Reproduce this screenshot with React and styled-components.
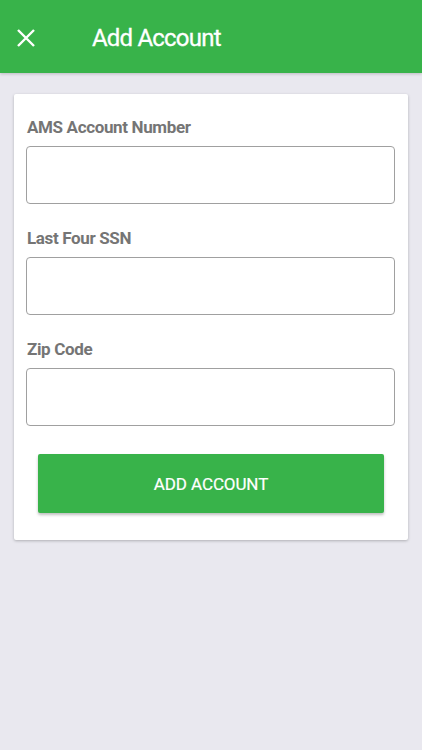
import React from "react";
import styled, { createGlobalStyle } from "styled-components";

const GlobalStyle = createGlobalStyle`
  html, body {
    margin: 0;
    padding: 0;
    background: #e9e8ef;
    font-family: Roboto, "Noto Sans", sans-serif;
  }
`;

const CloseIcon = () => (
  <svg width="20" height="20" viewBox="0 0 20 20">
    <path
      d="M2 2 L18 18 M18 2 L2 18"
      stroke="#fff"
      strokeWidth="2.4"
      strokeLinecap="butt"
    />
  </svg>
);

const fields = ["AMS Account Number", "Last Four SSN", "Zip Code"];

const App = () => (
  <Page>
    <GlobalStyle />
    <Header>
      <CloseButton>
        <CloseIcon />
      </CloseButton>
      <Title>Add Account</Title>
    </Header>
    <Card>
      {fields.map((label) => (
        <Field key={label}>
          <Label>{label}</Label>
          <Input type="text" />
        </Field>
      ))}
      <SubmitButton>ADD ACCOUNT</SubmitButton>
    </Card>
  </Page>
);

export default App;

const Page = styled.div`
  min-height: 750px;
  background: #e9e8ef;
`;

const Header = styled.div`
  display: flex;
  align-items: center;
  height: 73px;
  background: #38b34a;
  box-shadow: 0 1px 3px rgba(0, 0, 0, 0.2);
`;

const CloseButton = styled.div`
  display: flex;
  align-items: center;
  justify-content: center;
  width: 20px;
  height: 20px;
  margin-left: 16px;
  margin-top: 2px;
`;

const Title = styled.div`
  margin-left: 56px;
  margin-top: 2px;
  font-size: 24px;
  font-weight: 400;
  letter-spacing: -0.8px;
  color: #ffffff;
  -webkit-text-stroke: 0.3px #ffffff;
`;

const Card = styled.div`
  margin: 21px 14px 0;
  padding: 23px 13px 27px 12px;
  background: #ffffff;
  border-radius: 2px;
  box-shadow: 0 1px 3px rgba(0, 0, 0, 0.25);
`;

const Field = styled.div`
  margin-bottom: 24px;

  &:nth-last-of-type(1) {
    margin-bottom: 28px;
  }
`;

const Label = styled.div`
  font-size: 17px;
  line-height: 20px;
  font-weight: 700;
  color: #757575;
  margin-bottom: 9px;
  padding-left: 1px;
  letter-spacing: -0.35px;
`;

const Input = styled.input`
  display: block;
  box-sizing: border-box;
  width: 100%;
  height: 58px;
  border: 1px solid #a0a0a0;
  border-radius: 4px;
  outline: none;
  background: #ffffff;
  font-size: 17px;
  padding: 0 12px;
`;

const SubmitButton = styled.button`
  display: block;
  box-sizing: border-box;
  width: calc(100% - 23px);
  height: 59px;
  margin: 0 11px 0 12px;
  border: none;
  border-radius: 2px;
  background: #38b34a;
  box-shadow: 0 2px 3px rgba(0, 0, 0, 0.25);
  color: #ffffff;
  font-family: Roboto, "Noto Sans", sans-serif;
  font-size: 17px;
  font-weight: 400;
  letter-spacing: -0.1px;
  -webkit-text-stroke: 0.2px #ffffff;
  padding-top: 2px;
`;
